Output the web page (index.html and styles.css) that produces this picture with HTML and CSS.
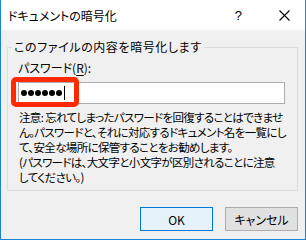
FILE: index.html
```html
<!DOCTYPE html>
<html lang="ja">
<head>
  <meta charset="UTF-8" />
  <title>ドキュメントの暗号化</title>
  <link rel="stylesheet" href="styles.css">
</head>
<body>
  <div class="window">
    <div class="titlebar">
      <span class="title">ドキュメントの暗号化</span>
      <span class="help">?</span>
      <svg class="close" width="11" height="11" viewBox="0 0 11 11">
        <path d="M0.5 0.5 L10.5 10.5 M10.5 0.5 L0.5 10.5" stroke="#000" stroke-width="1.1" fill="none"/>
      </svg>
    </div>
    <div class="content">
      <fieldset class="group">
        <legend>このファイルの内容を暗号化します</legend>
        <div class="label">パスワード(<u>R</u>):</div>
        <div class="field-wrap">
          <div class="field">
            <span class="dot"></span><span class="dot"></span><span class="dot"></span><span class="dot"></span><span class="dot"></span><span class="dot"></span><span class="caret"></span>
          </div>
          <div class="highlight"></div>
        </div>
        <p class="note">
          注意: 忘れてしまったパスワードを回復することはできませ<br>
          ん。パスワードと、それに対応するドキュメント名を一覧にし<br>
          て、安全な場所に保管することをお勧めします。<br>
          (パスワードは、大文字と小文字が区別されることに注意<br>
          してください。)
        </p>
      </fieldset>
      <div class="buttons">
        <button class="btn btn-default">OK</button>
        <button class="btn">キャンセル</button>
      </div>
    </div>
  </div>
</body>
</html>
```

FILE: styles.css
```css
body {
  margin: 0;
  background: #f0f0f0;
  font-family: "Noto Sans CJK JP", "Noto Sans", sans-serif;
  font-size: 12px;
  color: #000;
  font-feature-settings: "palt";
}
.window {
  width: 306px;
  height: 240px;
  box-sizing: border-box;
  border: 1px solid #1883d7;
  border-top: none;
  background: #f0f0f0;
  overflow: hidden;
}
.titlebar {
  height: 30px;
  background: #fff;
  display: flex;
  align-items: center;
  padding-left: 7px;
}
.title {
  flex: 1;
  font-size: 12px;
}
.help {
  font-family: "Liberation Sans", sans-serif;
  font-size: 13px;
  margin-right: 37px;
}
.close {
  margin-right: 15px;
}
.content {
  padding: 0 7px 0 6px;
}
.group {
  margin: 9px 0 0 0;
  border: 1px solid #dcdcdc;
  padding: 5px 10px 5px 10px;
  min-width: 0;
}
.group legend {
  padding: 0 2px;
  margin-left: -6px;
  line-height: 16px;
  letter-spacing: 0.6px;
}
.label {
  line-height: 16px;
}
.label u {
  text-decoration-thickness: 1px;
  text-underline-offset: 2px;
}
.field-wrap {
  position: relative;
  margin-top: 6px;
  margin-right: 2px;
}
.field {
  height: 22px;
  box-sizing: border-box;
  border: 1px solid #adadad;
  background: #fff;
  display: flex;
  align-items: center;
  padding-left: 2px;
}
.dot {
  width: 6px;
  height: 6px;
  border-radius: 50%;
  background: #000;
  margin-right: 1px;
}
.caret {
  width: 1px;
  height: 14px;
  background: #000;
  margin-left: 1px;
}
.highlight {
  position: absolute;
  left: -7px;
  top: -5px;
  width: 68px;
  height: 30px;
  box-sizing: border-box;
  border: 5px solid #ff2a00;
  border-radius: 5px;
}
.note {
  margin: 6px 0 0 1px;
  font-size: 11.5px;
  letter-spacing: -0.65px;
  line-height: 15px;
  white-space: nowrap;
}
.buttons {
  display: flex;
  justify-content: flex-end;
  gap: 12px;
  margin-top: 16px;
}
.btn {
  width: 73px;
  height: 24px;
  box-sizing: border-box;
  border: 1px solid #adadad;
  background: #e1e1e1;
  font-family: "Noto Sans CJK JP", "Noto Sans", sans-serif;
  font-size: 12px;
  font-feature-settings: "palt";
  color: #000;
  padding: 0;
}
.btn-default {
  border-color: #0078d7;
  background: #e5f1fb;
}
```
